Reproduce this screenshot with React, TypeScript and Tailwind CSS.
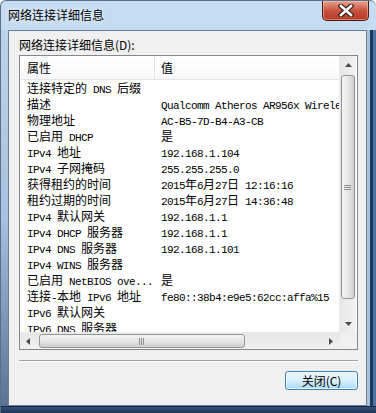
import type { ReactNode } from "react";

const ROWS: [string, string][] = [
  ["连接特定的 DNS 后缀", ""],
  ["描述", "Qualcomm Atheros AR956x Wireless Network Adapter"],
  ["物理地址", "AC-B5-7D-B4-A3-CB"],
  ["已启用 DHCP", "是"],
  ["IPv4 地址", "192.168.1.104"],
  ["IPv4 子网掩码", "255.255.255.0"],
  ["获得租约的时间", "2015年6月27日 12:16:16"],
  ["租约过期的时间", "2015年6月27日 14:36:48"],
  ["IPv4 默认网关", "192.168.1.1"],
  ["IPv4 DHCP 服务器", "192.168.1.1"],
  ["IPv4 DNS 服务器", "192.168.1.101"],
  ["IPv4 WINS 服务器", ""],
  ["已启用 NetBIOS ove...", "是"],
  ["连接-本地 IPv6 地址", "fe80::38b4:e9e5:62cc:affa%15"],
  ["IPv6 默认网关", ""],
  ["IPv6 DNS 服务器", ""],
];

// SimSun-like look: half-width ascii, full-width CJK
function Mixed({ text }: { text: string }) {
  const parts = text.match(/[\x00-\x7f]+|[^\x00-\x7f]+/g) ?? [];
  return (
    <>
      {parts.map((p, i) =>
        /^[\x00-\x7f]/.test(p) ? (
          <span key={i} className="font-['Liberation_Mono',monospace] text-[11px] tracking-[-0.6px]">
            {p}
          </span>
        ) : (
          <span key={i}>{p}</span>
        ),
      )}
    </>
  );
}

function Arrow({ dir }: { dir: "up" | "down" | "left" | "right" }) {
  const pts = {
    up: "0,4 3.5,0 7,4",
    down: "0,0 3.5,4 7,0",
    left: "4,0 0,3.5 4,7",
    right: "0,0 4,3.5 0,7",
  }[dir];
  const vertical = dir === "up" || dir === "down";
  return (
    <svg width={vertical ? 7 : 4} height={vertical ? 4 : 7}>
      <polygon points={pts} fill="#4a4a4a" />
    </svg>
  );
}

function ScrollBtn({ children }: { children: ReactNode }) {
  return <div className="flex h-[17px] w-[17px] shrink-0 items-center justify-center">{children}</div>;
}

function VScroll() {
  return (
    <div className="flex w-[17px] flex-col bg-linear-to-r from-[#e6e6e6] to-[#f2f2f2] border-l border-[#ececec]">
      <ScrollBtn>
        <Arrow dir="up" />
      </ScrollBtn>
      <div className="mx-[1px] mt-[2px] flex h-[224px] items-center justify-center rounded-[3px] border border-[#969696] bg-linear-to-r from-[#f4f4f4] via-[#e6e6e6] to-[#cfcfcf]">
        <div className="flex flex-col gap-[1px]">
          <div className="h-px w-[7px] bg-[#8e8e8e]" />
          <div className="h-px w-[7px] bg-[#8e8e8e]" />
          <div className="h-px w-[7px] bg-[#8e8e8e]" />
        </div>
      </div>
      <div className="flex-1" />
      <ScrollBtn>
        <Arrow dir="down" />
      </ScrollBtn>
    </div>
  );
}

function HScroll() {
  return (
    <div className="flex h-[17px] flex-1 items-stretch bg-linear-to-b from-[#e6e6e6] to-[#f2f2f2] border-t border-[#ececec]">
      <ScrollBtn>
        <Arrow dir="left" />
      </ScrollBtn>
      <div className="my-[1px] ml-[2px] flex w-[206px] items-center justify-center rounded-[3px] border border-[#969696] bg-linear-to-b from-[#f4f4f4] via-[#e6e6e6] to-[#cfcfcf]">
        <div className="flex gap-[1px]">
          <div className="h-[7px] w-px bg-[#8e8e8e]" />
          <div className="h-[7px] w-px bg-[#8e8e8e]" />
          <div className="h-[7px] w-px bg-[#8e8e8e]" />
        </div>
      </div>
      <div className="flex-1" />
      <ScrollBtn>
        <Arrow dir="right" />
      </ScrollBtn>
    </div>
  );
}

function CloseButton() {
  return (
    <div className="mr-[7px] flex h-[20px] w-[47px] items-center justify-center rounded-b-[5px] border border-t-0 border-[#4b1b14] bg-linear-to-b from-[#e3a190] via-[#c9533e] to-[#b63a24] shadow-[inset_0_0_0_1px_rgba(255,210,200,0.45)]">
      <svg width="16" height="13" viewBox="0 0 16 13">
        <path d="M3 2 L13 11 M13 2 L3 11" stroke="#3a2420" strokeWidth="5" strokeLinecap="square" />
        <path d="M3 2 L13 11 M13 2 L3 11" stroke="#ffffff" strokeWidth="2.6" strokeLinecap="square" />
      </svg>
    </div>
  );
}

export default function App() {
  return (
    <div className="flex h-[413px] w-[376px] flex-col overflow-hidden rounded-t-[6px] border-l border-t border-[#5d6f86] bg-linear-to-b from-[#c6dcf2] to-[#b6cfe9] font-['Noto_Sans_CJK_SC',sans-serif] text-black">
      {/* title bar */}
      <div className="flex h-[29px] shrink-0 items-start justify-between">
        <div className="ml-[7px] mt-[5px] text-[12px] leading-[18px] [text-shadow:0_0_6px_#ffffff]">网络连接详细信息</div>
        <CloseButton />
      </div>

      <div className="flex flex-1">
        <div className="w-[7px] bg-linear-to-b from-[#bcd3ec] via-[#a8c1de] to-[#5b7392]" />

        {/* client area */}
        <div className="flex w-[360px] flex-col border border-[#6f8096] bg-[#f0f0f0] pt-[6px]">
          <div className="ml-[10px] text-[12px] leading-[16px]">网络连接详细信息(D):</div>

          <div className="ml-[10px] mt-[2px] flex h-[295px] w-[339px] flex-col border border-[#828790] bg-white">
            <div className="flex h-[276px]">
              <div className="flex w-[319px] flex-col overflow-hidden">
                <div className="flex h-[24px] shrink-0 items-center border-b border-[#e5e5e5] bg-linear-to-b from-[#ffffff] to-[#f7f8fa] text-[12px]">
                  <div className="h-full w-[135px] border-r border-[#e5e5e5] pl-[7px] leading-[24px]">属性</div>
                  <div className="pl-[6px] leading-[24px]">值</div>
                </div>
                {ROWS.map(([name, value]) => (
                  <div key={name} className="flex h-[16px] shrink-0 whitespace-pre text-[12px] leading-[16px]">
                    <div className="h-[16px] w-[135px] shrink-0 overflow-hidden pl-[7px]">
                      <Mixed text={name} />
                    </div>
                    <div className="h-[16px] pl-[6px]">
                      <Mixed text={value} />
                    </div>
                  </div>
                ))}
              </div>
              <VScroll />
            </div>
            <div className="flex">
              <HScroll />
              <div className="h-[17px] w-[17px] bg-[#f0f0f0]" />
            </div>
          </div>

          <div className="ml-[10px] mt-[10px] w-[339px] border-t border-b border-t-[#a0a0a0] border-b-white" />

          <div className="mr-[8px] mt-[9px] flex justify-end">
            <div className="flex h-[19px] w-[73px] items-center justify-center rounded-[3px] border border-[#3c7fb1] bg-linear-to-b from-[#eaf6fd] via-[#d9f0fc] to-[#a7d9f5] text-[12px] leading-[16px] shadow-[inset_0_0_0_1px_rgba(255,255,255,0.7)]">
              关闭(C)
            </div>
          </div>
        </div>

        <div className="w-[9px] bg-[linear-gradient(to_right,#a9c0d9_0,#a9c0d9_3px,#1c3a61_3px,#1c3a61_6px,#4d74a1_6px)]" />
      </div>

      <div className="h-[7px] shrink-0 border-t border-[#15273d] bg-linear-to-b from-[#33507a] to-[#1f3655]" />
    </div>
  );
}
